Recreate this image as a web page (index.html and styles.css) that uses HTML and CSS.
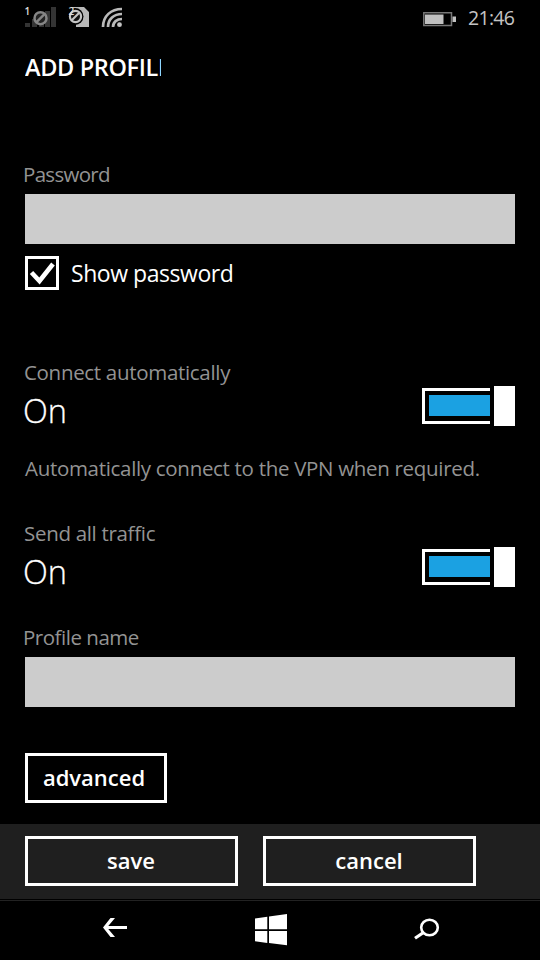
FILE: index.html
```html
<!DOCTYPE html>
<html lang="en">
<head>
<meta charset="utf-8">
<title>Add profile</title>
<link rel="stylesheet" href="styles.css">
</head>
<body>
<div class="phone">
  <header class="status">
    <svg class="signals" width="110" height="34" viewBox="0 0 110 34">
      <g fill="#343434"><path d="M10 23h5v4h-5zM17 19h5v8h-5zM24 15h5v12h-5zM30 11h5v16h-5zM36 7h5v20h-5z"/></g>
      <circle cx="25.500" cy="18.200" r="6" fill="#222" stroke="#858585" stroke-width="2.500"/>
      <path d="M21.500 22.200l8-8" stroke="#858585" stroke-width="2.500"/>
      <text x="9.500" y="15" class="sim">1</text>
      <path d="M57 7h12l5 5v15H61v-4z" fill="#b9b9b9"/>
      <circle cx="60" cy="16.500" r="8.500" fill="#000"/>
      <circle cx="60.500" cy="16.500" r="5.600" fill="#111" stroke="#c4c4c4" stroke-width="2.200"/>
      <path d="M56.500 20.500l8-8" stroke="#c4c4c4" stroke-width="2.200"/>
      <text x="53.500" y="15" class="sim">2</text>
      <g fill="none" stroke="#b9b9b9" stroke-width="2.700">
        <path d="M88 27C88 16 96 9 107 9M93 27C93 19 99 14 107 14M98 27C98 22 102 19 107 19"/>
      </g>
      <circle cx="104.500" cy="24.700" r="2.400" fill="#c4c4c4"/>
    </svg>
    <svg class="battery" width="34" height="16" viewBox="0 0 34 16">
      <path d="M.8 .8h27.700v12.700H.8z" fill="none" stroke="#777" stroke-width="1.500"/>
      <path d="M2 2.500h18.500v9.500H2zM29.500 4.500H33v5.500h-3.500z" fill="#c0c0c0"/>
    </svg>
    <span class="time">21:46</span>
  </header>
  <h1 class="title">ADD PROFILE</h1>
  <main class="form">
    <label class="label password-label" for="password">Password</label>
    <input class="field" id="password">
    <div class="check-row">
      <span class="check"><svg width="28" height="28" viewBox="0 0 28 28"><path d="M3.500 13.500l8 8.500L25 5" fill="none" stroke="#fff" stroke-width="4.600"/></svg></span>
      <span class="check-text">Show password</span>
    </div>
    <section class="setting auto">
      <div class="label connect">Connect automatically</div>
      <div class="toggle-row"><span class="value">On</span><span class="toggle"><i class="track"></i><i class="thumb"></i></span></div>
      <p class="label hint">Automatically connect to the VPN when required.</p>
    </section>
    <section class="setting traffic">
      <div class="label send">Send all traffic</div>
      <div class="toggle-row"><span class="value">On</span><span class="toggle"><i class="track"></i><i class="thumb"></i></span></div>
    </section>
    <label class="label name-label" for="name">Profile name</label>
    <input class="field" id="name">
    <button class="button advanced">advanced</button>
  </main>
  <div class="actions">
    <button class="button">save</button>
    <button class="button">cancel</button>
  </div>
  <nav class="nav">
    <svg width="26" height="22" viewBox="0 0 26 22"><path d="M24 10.500H3" fill="none" stroke="#fff" stroke-width="3"/><path d="M7.500 1H12L4 10.500l8 9.500H7.500L0 10.500z" fill="#fff"/></svg>
    <svg width="32" height="32" viewBox="0 0 32 32"><path d="M0 4.500l12.300-1.800v12.600H0zM14 2.400L32 0v15.300H14zM0 17h12.300v12L0 27.300zM14 17h18v14.300L14 29z" fill="#fff"/></svg>
    <svg width="26" height="22" viewBox="0 0 26 22"><ellipse cx="15.500" cy="9.500" rx="8.300" ry="7.800" fill="none" stroke="#fff" stroke-width="2.600"/><path d="M9.500 14.500L1 20.300" stroke="#fff" stroke-width="3.200"/></svg>
  </nav>
</div>
</body>
</html>
```

FILE: styles.css
```css
* { box-sizing: border-box; }
body { margin: 0; background: #000; color: #fff; font-family: "Open Sans", "Noto Sans", sans-serif; }
.phone { width: 540px; height: 960px; display: flex; flex-direction: column; overflow: hidden; background: #000; }
.status { height: 35px; flex: none; display: flex; align-items: flex-start; padding: 0 25px 0 15px; }
.sim { font-size: 10px; font-weight: 600; fill: #ddd; }
.battery { margin: 12px 0 0 298px; flex: none; }
.time { margin-left: 11px; line-height: 35px; font-size: 19.500px; letter-spacing: -0.700px; color: #c4c4c4; white-space: nowrap; }
.title { flex: none; margin: 16px 0 0 25px; width: 136px; height: 32px; line-height: 32px; overflow: hidden; font-size: 23.500px; font-weight: 600; letter-spacing: -0.360px; white-space: nowrap; }
.form { height: 741px; flex: none; padding: 77px 25px 0; display: flex; flex-direction: column; }
.label { display: block; height: 28px; line-height: 28px; margin: 0 0 0 -1px; font-size: 20.500px; letter-spacing: -0.310px; color: #939393; white-space: nowrap; flex: none; }
.password-label { margin-left: -2px; letter-spacing: -0.700px; }
.name-label { letter-spacing: -0.480px; }
.field { flex: none; display: block; width: 490px; height: 50px; margin: 6px 0 0; border: 0; border-radius: 0; background: #ccc; }
.check-row { display: flex; align-items: center; height: 34px; margin-top: 12px; gap: 12px; }
.check { width: 34px; height: 34px; border: 3px solid #fff; }
.check svg { display: block; }
.check-text { font-size: 23px; letter-spacing: -0.450px; line-height: 34px; white-space: nowrap; }
.setting { flex: none; }
.auto { margin-top: 68px; }
.traffic { margin-top: 37px; }
.toggle-row { display: flex; justify-content: space-between; height: 40px; }
.value { margin-left: -2px; font-size: 32.500px; font-weight: 300; line-height: 50px; -webkit-text-stroke: 0.300px #fff; }
.toggle { display: flex; align-items: center; gap: 4px; height: 40px; }
.track { width: 68px; height: 36px; border: 3px solid #fff; border-right: 0; padding: 4px 0 5px 4px; background: #1ba1e2 content-box; }
.thumb { width: 21px; height: 40px; background: #fff; }
.hint { margin: 28px 0 0; }
.name-label { margin: 36px 0 0 -2px; }
.button { height: 50px; width: 213px; padding: 0 1px 3px 0; border: 3px solid #fff; border-radius: 0; background: transparent; color: #fff; font: 600 22px "Open Sans", "Noto Sans", sans-serif; }
.button.advanced { flex: none; width: 142px; margin-top: 46px; padding-right: 4px; }
.actions { flex: none; height: 75px; background: #1f1f1f; padding: 12px 25px; display: flex; gap: 25px; }
.nav { flex: none; height: 61px; margin-top: 1px; border-top: 1px solid #222; display: grid; grid-template-columns: 32px 32px 26px; column-gap: 120px; padding: 13px 0 0 103px; align-items: start; }
.nav svg:first-child { margin-top: 3px; }
.nav svg:last-child { margin-top: 4px; margin-left: 7px; }
```
